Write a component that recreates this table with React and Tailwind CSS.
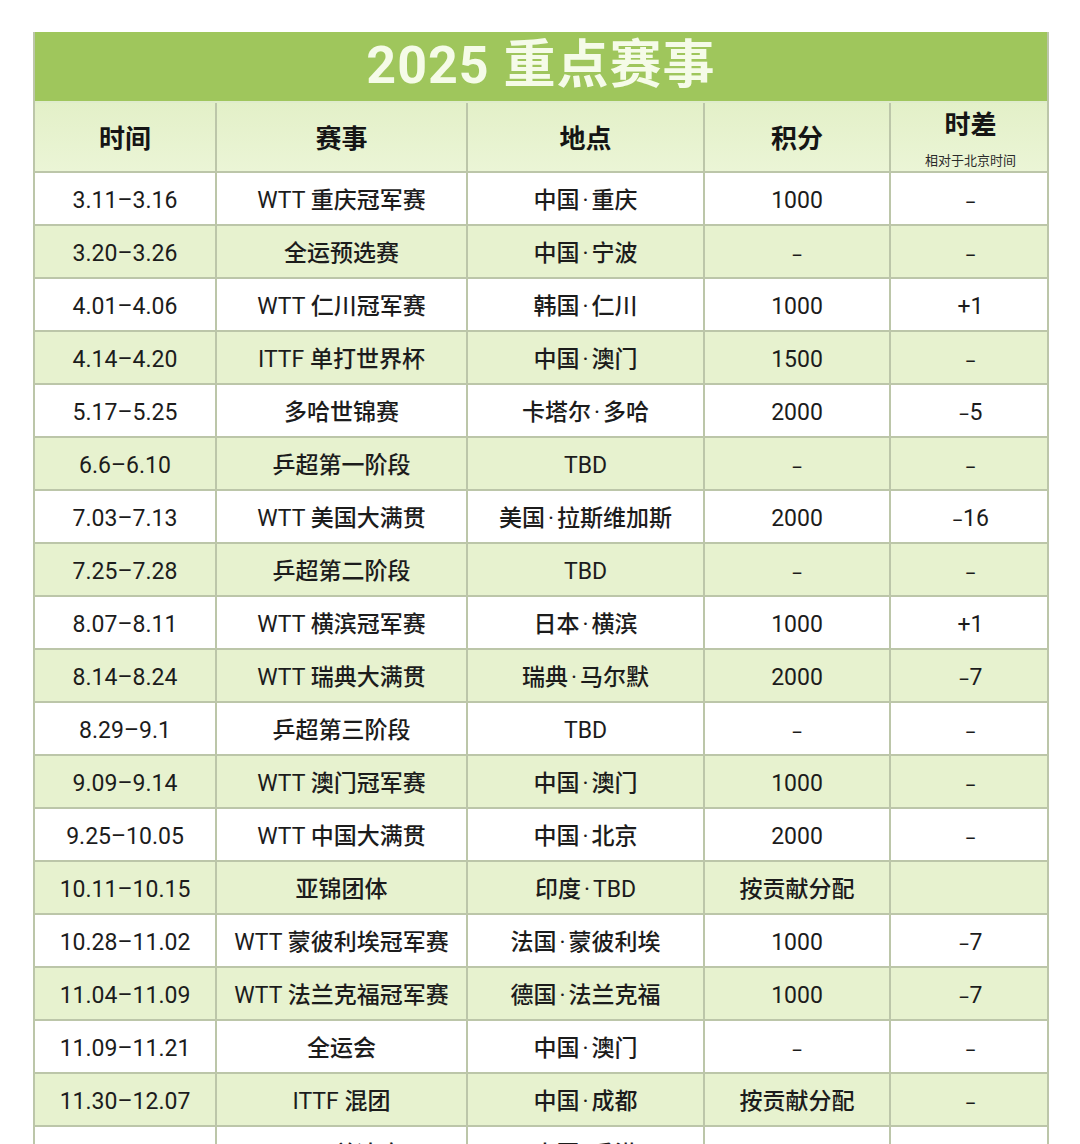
const rows = [
  ["3.11–3.16", "WTT 重庆冠军赛", "中国·重庆", "1000", "-"],
  ["3.20–3.26", "全运预选赛", "中国·宁波", "-", "-"],
  ["4.01–4.06", "WTT 仁川冠军赛", "韩国·仁川", "1000", "+1"],
  ["4.14–4.20", "ITTF 单打世界杯", "中国·澳门", "1500", "-"],
  ["5.17–5.25", "多哈世锦赛", "卡塔尔·多哈", "2000", "-5"],
  ["6.6–6.10", "乒超第一阶段", "TBD", "-", "-"],
  ["7.03–7.13", "WTT 美国大满贯", "美国·拉斯维加斯", "2000", "-16"],
  ["7.25–7.28", "乒超第二阶段", "TBD", "-", "-"],
  ["8.07–8.11", "WTT 横滨冠军赛", "日本·横滨", "1000", "+1"],
  ["8.14–8.24", "WTT 瑞典大满贯", "瑞典·马尔默", "2000", "-7"],
  ["8.29–9.1", "乒超第三阶段", "TBD", "-", "-"],
  ["9.09–9.14", "WTT 澳门冠军赛", "中国·澳门", "1000", "-"],
  ["9.25–10.05", "WTT 中国大满贯", "中国·北京", "2000", "-"],
  ["10.11–10.15", "亚锦团体", "印度·TBD", "按贡献分配", ""],
  ["10.28–11.02", "WTT 蒙彼利埃冠军赛", "法国·蒙彼利埃", "1000", "-7"],
  ["11.04–11.09", "WTT 法兰克福冠军赛", "德国·法兰克福", "1000", "-7"],
  ["11.09–11.21", "全运会", "中国·澳门", "-", "-"],
  ["11.30–12.07", "ITTF 混团", "中国·成都", "按贡献分配", "-"],
  ["12.10–12.14", "WTT 总决赛", "中国·香港", "-", "-"],
];

const cols = "grid grid-cols-[182px_251px_237px_186px_159px]";

// CJK runs a bit heavier than latin/digits, like the source image
function Text({ value }) {
  return (
    <span className="whitespace-pre">
      {value.split(/([\u4e00-\u9fff]+|·|-)/).map((part, i) => {
        if (!part) return null;
        if (part === "·") return <span key={i} className="mx-[3px]">·</span>;
        if (part === "-") return <span key={i} className="text-[17px] font-medium">–</span>;
        if (/[\u4e00-\u9fff]/.test(part)) return <span key={i} className="font-medium">{part}</span>;
        return <span key={i}>{part}</span>;
      })}
    </span>
  );
}

function Row({ cells, green }) {
  return (
    <div className={`${cols} h-[53px] border-b-2 border-[#bcc6a9] ${green ? "bg-[#e7f2cf]" : "bg-white"}`}>
      {cells.map((c, i) => (
        <div
          key={i}
          className={`flex items-center justify-center pt-[5px] text-[23px] text-[#1c1c1c] font-normal ${i < 4 ? "border-r-2 border-[#bcc6a9]" : ""}`}
        >
          <Text value={c} />
        </div>
      ))}
    </div>
  );
}

export default function App() {
  return (
    <div className="w-[1080px] h-[1144px] overflow-hidden bg-white pt-[32px] pl-[33px] font-['Roboto','Noto_Sans_CJK_SC',sans-serif]">
      <div className="w-[1016px] border-l-2 border-r-2 border-[#bcc6a9]">
        <div className="h-[71px] bg-[#9fc65c] flex items-center justify-center border-b-2 border-[#dfeccb]">
          <h1 className="text-[52px] font-bold text-[#f5fbe8] leading-none tracking-[1px] pb-[2px]">2025 重点赛事</h1>
        </div>
        <div className={`${cols} h-[70px] border-b-2 border-[#bcc6a9] bg-gradient-to-b from-[#e3f0c8] to-[#ebf5d6]`}>
          {["时间", "赛事", "地点", "积分"].map((h) => (
            <div key={h} className="flex items-center justify-center pt-[5px] text-[26px] font-bold text-[#151515] border-r-2 border-[#bcc6a9]">
              {h}
            </div>
          ))}
          <div className="flex flex-col items-center pt-[4px]">
            <span className="text-[26px] font-bold text-[#151515] leading-[36px]">时差</span>
            <span className="text-[13px] text-[#2a2a2a] mt-[11px] leading-none">相对于北京时间</span>
          </div>
        </div>
        {rows.map((r, i) => (
          <Row key={i} cells={r} green={i % 2 === 1} />
        ))}
      </div>
    </div>
  );
}
